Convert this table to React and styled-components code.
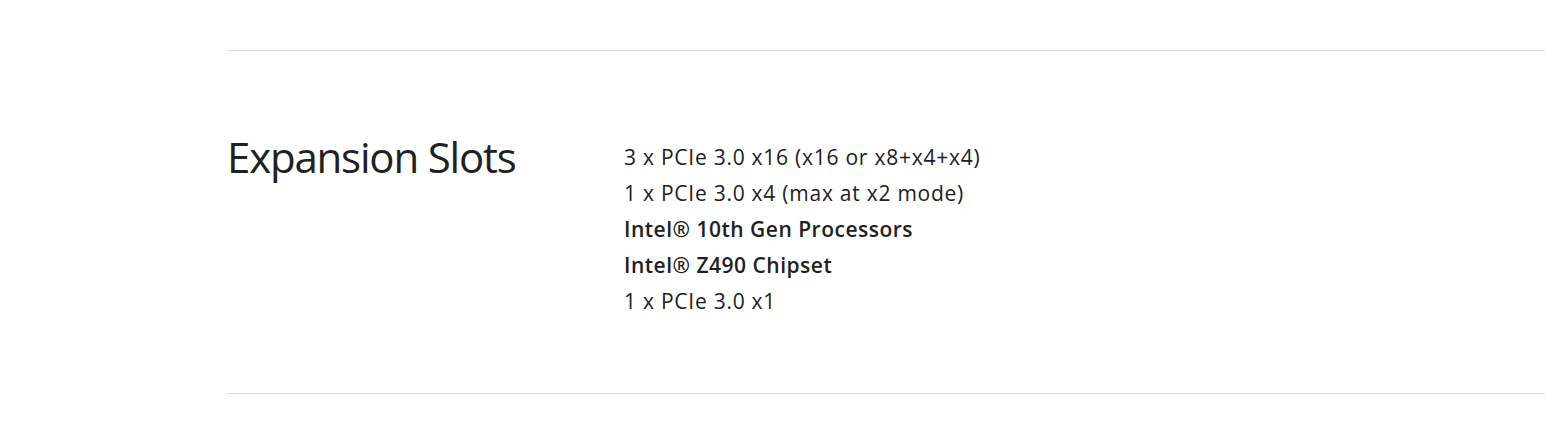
import styled, { createGlobalStyle } from "styled-components";

const GlobalStyle = createGlobalStyle`
  body {
    margin: 0;
    background: #fff;
    font-family: "Open Sans", "Noto Sans", sans-serif;
    color: #212121;
  }
`;

const SpecSection = styled.section`
  padding: 50px 0 0 227px;
`;

const SpecRow = styled.div`
  display: grid;
  grid-template-columns: 397px 1fr;
  border-top: 1px solid #dedede;
  border-bottom: 1px solid #dedede;
  padding: 82px 0 68px;
  height: 344px;
  box-sizing: border-box;
`;

const SpecTitle = styled.h2`
  margin: 0;
  font-weight: 400;
  font-size: 42px;
  line-height: 48px;
  letter-spacing: -1.2px;
`;

const SpecList = styled.ul`
  list-style: none;
  margin: 6px 0 0;
  padding: 0;
`;

const SpecItem = styled.li`
  font-size: 21px;
  line-height: 36px;
  font-weight: ${(p) => (p.$bold ? 600 : 400)};
  letter-spacing: ${(p) => (p.$bold ? "0.5px" : "0.75px")};
`;

const items = [
  { text: "3 x PCIe 3.0 x16 (x16 or x8+x4+x4)" },
  { text: "1 x PCIe 3.0 x4 (max at x2 mode)" },
  { text: "Intel® 10th Gen Processors", bold: true },
  { text: "Intel® Z490 Chipset", bold: true },
  { text: "1 x PCIe 3.0 x1" },
];

export default function App() {
  return (
    <>
      <GlobalStyle />
      <SpecSection>
        <SpecRow>
          <SpecTitle>Expansion Slots</SpecTitle>
          <SpecList>
            {items.map((item) => (
              <SpecItem key={item.text} $bold={item.bold}>
                {item.text}
              </SpecItem>
            ))}
          </SpecList>
        </SpecRow>
      </SpecSection>
    </>
  );
}
